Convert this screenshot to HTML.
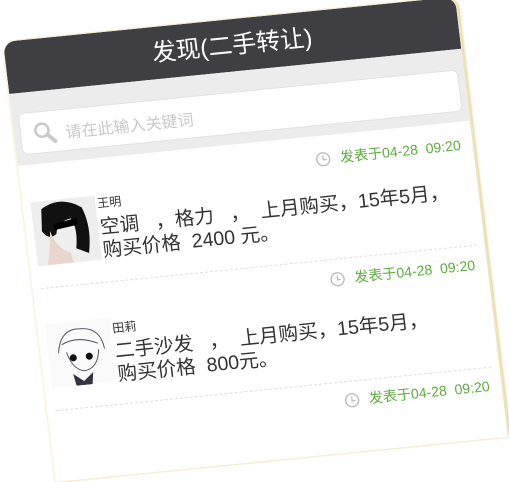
<!DOCTYPE html>
<html><head><meta charset="utf-8"><style>
html,body{margin:0;padding:0;width:509px;height:415px;overflow:hidden;background:#fff;}
.card{position:absolute;left:0;top:0;width:452px;height:440px;background:#fff;border-radius:12px 12px 0 0;
transform-origin:0 0;transform:matrix(1,-0.1,0.12,1,3,42);box-shadow:2px 0 0 #efe3b8,3px 0 2px #e0cf95,-1px 0 2px #f3ebcc;overflow:hidden;
font-family:"Liberation Sans","Noto Sans CJK SC",sans-serif;}
.hdr{position:absolute;left:0;top:0;width:452px;height:52px;background:#3f3e43;color:#fff;font-size:24px;text-align:center;line-height:54px;}
.band{position:absolute;left:0;top:52px;width:452px;height:72px;background:#ececec;}
.search{position:absolute;left:6px;top:20px;width:438px;height:40px;background:#fff;border-radius:6px;border:1px solid #e2e2e2;}
.ph{position:absolute;left:44px;top:9px;font-size:16px;color:#c9c9c9;}
.ts{position:absolute;right:12px;font-size:14px;color:#5aae3a;white-space:nowrap;}
.ts svg{vertical-align:middle;margin-right:9px;position:relative;top:-1px}
.av{position:absolute;left:8px;width:64px;height:64px;overflow:hidden;background:#f4f4f4;}
.nm{position:absolute;left:74px;font-size:12px;color:#333;}
.tx{position:absolute;left:74px;font-size:19.5px;color:#333;line-height:21px;white-space:nowrap;}
.dv{position:absolute;left:8px;width:436px;border-top:1px dashed #ddd;}
</style></head><body>
<div class="card">
<div class="hdr">发现(二手转让)</div>
<div class="band"><div class="search">
<svg style="position:absolute;left:12px;top:9px" width="24" height="24" viewBox="0 0 24 24"><circle cx="9" cy="9" r="6.5" fill="none" stroke="#c8c8c8" stroke-width="2.5"/><path d="M14 14 L21 21" stroke="#c8c8c8" stroke-width="4" stroke-linecap="round"/></svg>
<div class="ph">请在此输入关键词</div></div></div>

<div class="ts" style="top:137px"><svg width="15" height="15" viewBox="0 0 14 14"><circle cx="7" cy="7" r="6" fill="none" stroke="#bbb" stroke-width="1.3"/><path d="M7 3.5V7.5H10" fill="none" stroke="#bbb" stroke-width="1.2"/></svg>发表于04-28&nbsp;&nbsp;09:20</div>
<div class="av" style="top:161px;background:#eee"><svg width="64" height="64" viewBox="0 0 64 64"><path d="M10 8 Q30 -4 50 10 Q58 30 52 56 L40 50 Q44 30 38 20 Q24 22 22 34 Q14 40 8 30 Z" fill="#111"/><path d="M20 24 L44 20 L44 27 L20 30Z" fill="#000"/><path d="M16 30 Q20 48 34 54 L36 64 L10 64 Q14 50 16 30Z" fill="#e8d5cc"/></svg></div>
<div class="nm" style="top:160px">王明</div>
<div class="tx" style="top:183px">空调&nbsp;&nbsp;&nbsp;，格力&nbsp;&nbsp;&nbsp;，&nbsp;&nbsp;上月购买，15年5月，</div>
<div class="tx" style="top:206px">购买价格&nbsp;&nbsp;2400 元。</div>
<div class="dv" style="top:247px"></div>

<div class="ts" style="top:257px"><svg width="15" height="15" viewBox="0 0 14 14"><circle cx="7" cy="7" r="6" fill="none" stroke="#bbb" stroke-width="1.3"/><path d="M7 3.5V7.5H10" fill="none" stroke="#bbb" stroke-width="1.2"/></svg>发表于04-28&nbsp;&nbsp;09:20</div>
<div class="av" style="top:283px;background:#fafafa"><svg width="64" height="64" viewBox="0 0 64 64"><path d="M10 30 Q14 6 34 8 Q54 8 56 30 M14 22 Q30 14 50 24 M18 30 Q22 48 34 50 Q48 48 50 30" fill="none" stroke="#556" stroke-width="1"/><circle cx="24" cy="36" r="3.5" fill="#111"/><circle cx="40" cy="36" r="3.5" fill="#111"/><path d="M22 52 L32 60 L42 52 L40 64 L24 64Z" fill="#334"/></svg></div>
<div class="nm" style="top:285px">田莉</div>
<div class="tx" style="top:307px">二手沙发&nbsp;&nbsp;&nbsp;，&nbsp;&nbsp;上月购买，15年5月，</div>
<div class="tx" style="top:330px">购买价格&nbsp;&nbsp;800元。</div>
<div class="dv" style="top:369px"></div>

<div class="ts" style="top:378px"><svg width="15" height="15" viewBox="0 0 14 14"><circle cx="7" cy="7" r="6" fill="none" stroke="#bbb" stroke-width="1.3"/><path d="M7 3.5V7.5H10" fill="none" stroke="#bbb" stroke-width="1.2"/></svg>发表于04-28&nbsp;&nbsp;09:20</div>
</div>
</body></html>
